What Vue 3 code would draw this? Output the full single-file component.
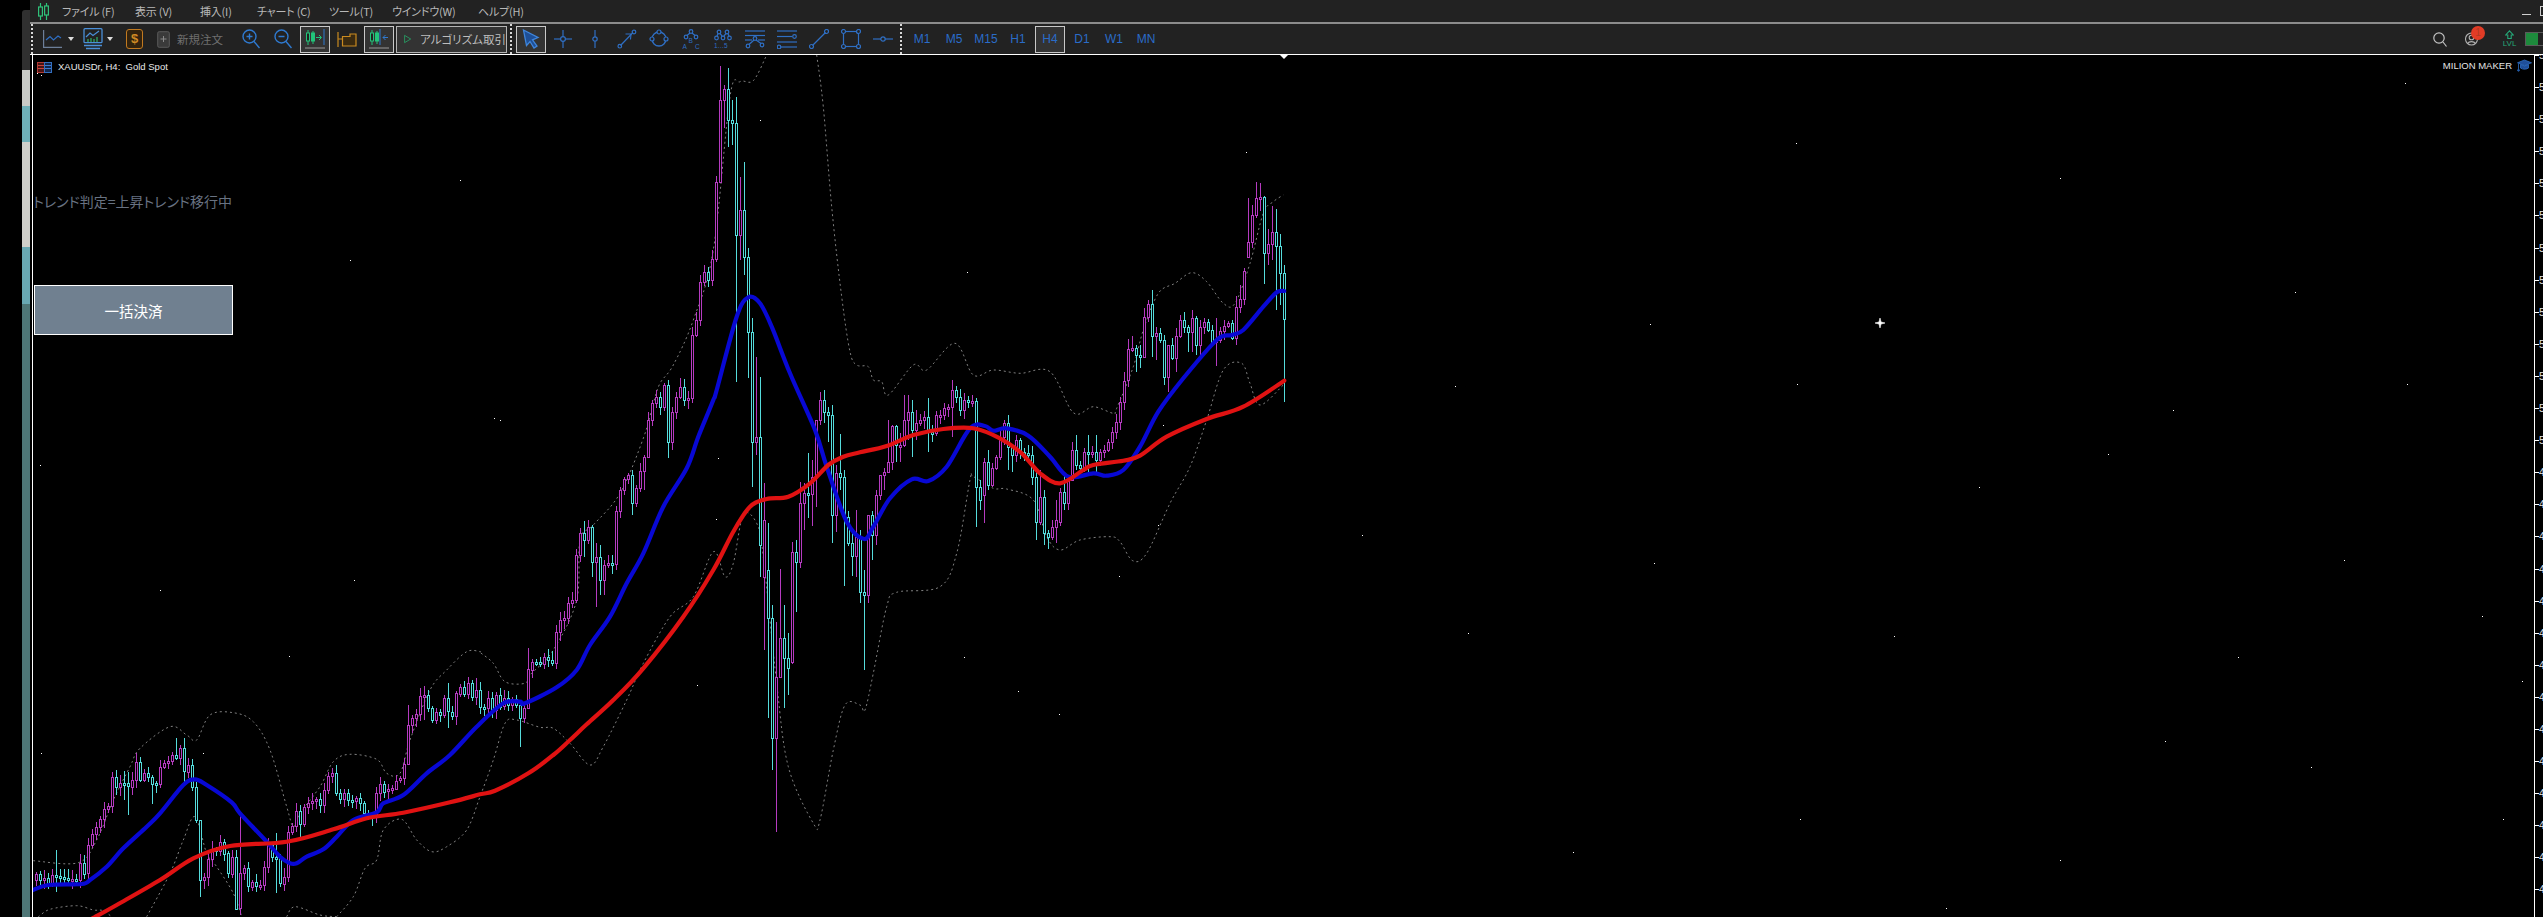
<script setup>
const W = 2501, H = 862

// ---------- candle closes, read off the chart ----------
const A = [702,720,714,730,704,708,712,714,720,717,720,668,700,615,582,562,538,508,498,410,440,428,430,440,420,365,418,398,410,430,432,380,368,362,345,355,325,395,375,442,540,720,712,658,628,632,605,640,700,650,805,700,685,740,725,738,736,682,615,650,652,730,710,575,558,512,550,500,488,483,478,495,450,408,398,458,475,458,480,485,475,490,520,525,528,460,432,455,448,445,422,415,373,255,235,222,168,165,205,240,215,225,175,215,228,160,140,160,128,170,150,200,205,175,210,165].map(v => 640 + v / 3)
const B = [920,895,915,897,915,955,925,808,785,787,790,770,780,790,697,660,655,610,600,465,400,420,380,485,470,540,495,490,492,333,270,238,225,310,265,213,170,60].map(v => 400 + v / 3)
const C = [403,397,407,385,442,412,397,387,400,398,335,320,282,272,280,259,182,100,89,120,123,235,210,257,332,442,437,545,520,618,738,677,638,658,668,552,562,503,493,494,477,420,400,412,415,515,473,477,517,543,556,537,592,595,515,535,495,475,472,462,426,445,445,420,412,430,423,420,417,432,433,415,415,408,407,390,397,410,400,402,401,487,500,462,485,468,457,437,423,447,455,440,452,453,455,477,522,497,533,537,527,520,492,503,480,450,465,468,452,453,452,460,452,450,442,432,422,402,381,349,348,355,357,317,304,336,333,340,377,345,358,336,320,327,332,318,345,327,322,330,342,340,331,326,323,338,307,299,271,242,215,198,197,253,244,232,246,273,319]
const closes = [...A, ...B, ...C]

const bodyFix = { 616:[511,564],764:[520,577],768:[570,618],776:[677,738],792:[552,662],800:[503,562],1248:[242,257],1264:[197,253],984:[462,495],1060:[492,522],1068:[480,503],1144:[317,357],1128:[349,380] }
const wicks = { 56:[850,892],116:[770,795],124:[771,800],128:[772,815],152:[775,804],176:[738,760],184:[738,785],200:[820,897],236:[850,908],240:[815,915],276:[833,893],300:[805,837],408:[705,760],424:[686,720],448:[683,728],476:[678,705],520:[700,747],528:[648,693],584:[521,557],592:[525,577],596:[543,607],600:[545,595],604:[560,595],632:[470,515],636:[485,507],644:[455,490],648:[412,448],668:[380,458],716:[176,262],720:[66,180],724:[85,128],728:[68,147],732:[100,145],736:[97,382],740:[177,260],744:[162,275],748:[248,378],752:[318,487],756:[357,455],760:[377,577],764:[483,650],768:[523,718],772:[605,770],776:[622,832],780:[569,670],784:[605,708],788:[633,695],792:[542,664],796:[540,612],800:[482,568],804:[483,530],808:[453,518],812:[460,526],816:[425,507],820:[392,425],824:[390,423],828:[407,442],832:[405,543],836:[465,532],840:[434,490],844:[470,586],852:[530,576],856:[510,577],860:[530,603],864:[570,670],868:[515,603],872:[511,560],876:[490,545],880:[483,500],884:[468,490],888:[420,470],892:[425,470],896:[425,462],900:[433,462],904:[395,447],908:[395,440],912:[400,457],916:[410,440],928:[398,452],944:[403,420],952:[380,437],976:[398,527],980:[480,510],984:[458,523],988:[450,490],1000:[430,460],1004:[420,445],1008:[415,470],1012:[448,472],1032:[446,485],1036:[470,540],1040:[470,525],1044:[490,545],1048:[530,549],1052:[520,540],1056:[500,543],1064:[473,510],1072:[442,478],1076:[435,470],1088:[435,472],1096:[435,472],1128:[339,387],1132:[336,352],1136:[345,372],1140:[345,368],1144:[308,358],1148:[300,322],1152:[290,357],1156:[327,360],1164:[335,385],1168:[345,392],1172:[338,360],1176:[328,372],1180:[315,338],1188:[325,352],1192:[310,352],1196:[316,355],1200:[320,358],1216:[318,366],1224:[320,340],1232:[320,340],1236:[296,345],1240:[285,313],1244:[268,305],1248:[198,258],1252:[205,248],1256:[182,218],1260:[183,211],1264:[196,284],1268:[229,265],1272:[206,260],1276:[209,310],1280:[234,305],1284:[265,402] }

let seed = 73
const rnd = () => (seed = (seed * 16807) % 2147483647) / 2147483647

const candles = closes.map((close, i) => {
  const x = 36 + i * 4
  const open = i ? closes[i - 1] : close + 6
  const up = close <= open
  let top = Math.min(open, close), bot = Math.max(open, close)
  if (bodyFix[x]) [top, bot] = bodyFix[x]
  if (bot - top < 2) bot = top + 2
  const hw = [top - (2 + rnd() * 7), bot + (2 + rnd() * 7)]
  const [hi, lo] = wicks[x] || hw
  return { x, top: Math.round(top), h: Math.round(bot - top), hi: Math.round(hi), lo: Math.round(lo), cls: up ? 'm' : 'c' }
})

// ---------- lines ----------
const z = (x0, y0, a) => a.map(([X, Y]) => [x0 + X / 3, y0 + Y / 3])
const z5 = a => z(0, 640, a), z8 = a => z(480, 400, a), z7 = a => z(650, 50, a), z9 = a => z(740, 380, a), z10 = a => z(950, 340, a), z6 = a => z(1100, 150, a)

const smooth = pts => {
  let d = `M${pts[0][0].toFixed(1)} ${pts[0][1].toFixed(1)}`
  for (let i = 0; i < pts.length - 1; i++) {
    const p0 = pts[i - 1] || pts[i], p1 = pts[i], p2 = pts[i + 1], p3 = pts[i + 2] || p2
    const c1x = p1[0] + (p2[0] - p0[0]) / 6, c1y = p1[1] + (p2[1] - p0[1]) / 6
    const c2x = p2[0] - (p3[0] - p1[0]) / 6, c2y = p2[1] - (p3[1] - p1[1]) / 6
    d += `C${c1x.toFixed(1)} ${c1y.toFixed(1)} ${c2x.toFixed(1)} ${c2y.toFixed(1)} ${p2[0].toFixed(1)} ${p2[1].toFixed(1)}`
  }
  return d
}

const blue = smooth([[33,890],
  ...z5([[145,735],[245,732],[270,720],[320,680],[370,625],[440,560],[480,520],[550,435],[585,418],[620,435],[695,487],[720,520],[800,605],[840,650],[870,670],[890,670],[920,650],[970,628],[1010,590],[1060,540],[1130,517],[1150,490],[1210,465],[1280,400],[1350,345],[1430,260]]),
  ...z8([[70,910],[120,905],[135,910],[230,862],[290,810],[330,735],[390,650],[440,550],[490,460],[550,320],[620,205],[655,110],[700,0]]),
  ...z7([[200,1020],[260,800],[295,742],[330,760],[365,830],[420,970]]),
  ...z9([[225,150],[260,260],[320,425],[372,477],[400,440],[450,355],[515,298],[565,303],[620,260],[690,145]]),
  ...z10([[105,258],[130,272],[170,265],[235,287],[300,350],[355,410],[430,400],[470,407],[520,390],[570,320],[625,215],[700,115],[800,0]]),
  ...z6([[395,555],[430,540],[490,470],[530,427],[553,423]])])

const red = smooth([[80,925],
  ...z5([[285,831],[350,795],[480,720],[580,655],[690,618],[860,605],[1000,568],[1100,535],[1210,518],[1350,487]]),
  ...z8([[0,1183],[45,1172],[145,1120],[220,1065],[270,1020],[320,973],[400,900],[490,805],[610,650],[700,510],[760,395],[810,320],[860,297],[925,290],[990,250],[1045,195],[1090,170],[1140,157]]),
  ...z9([[440,198],[520,165],[610,147],[700,145]]),
  ...z10([[150,295],[215,340],[270,400],[330,430],[400,390],[430,375],[520,362],[570,347],[650,290],[770,237],[880,200],[1003,122]])])

const bands = [
  [...z5([[100,662],[235,668],[290,600],[340,480],[390,380],[420,325],[510,260],[560,285],[590,300],[630,225],[700,218],[760,245],[810,330],[860,500],[880,560],[900,520],[960,440],[1000,365],[1050,343],[1130,358],[1160,400],[1200,400],[1230,300],[1290,150],[1340,90],[1400,35],[1440,35]]),
   ...z8([[0,757],[40,790],[75,845],[135,850],[150,825],[220,750],[290,600],[300,420],[340,375],[420,280],[490,115],[520,10]]),
   ...z7([[30,1000],[70,945],[130,810],[190,600],[240,140],[270,95],[310,92],[350,15]])],
  [...z7([[500,15],[520,170],[545,470],[575,740],[600,905],[620,945],[655,950],[670,990],[695,995],[715,1035],[790,945],[830,960],[915,880],[970,975]]),
   ...z10([[130,90],[210,100],[300,95],[370,218],[430,200],[490,220]]),
   ...z6([[50,775],[100,650],[130,540],[175,430],[225,400],[275,368],[320,395],[370,460],[405,460],[450,340],[490,190],[520,155],[550,135]])],
  z5([[100,835],[115,830],[150,808],[230,797],[280,810],[310,812],[340,835]]),
  z5([[440,830],[510,700],[550,600],[585,530],[620,640],[650,680],[700,760],[725,830]]),
  z5([[860,830],[885,800],[960,825],[1010,830]]),
  [...z5([[1010,830],[1060,770],[1095,685],[1130,660],[1150,570],[1205,538],[1250,600],[1295,635],[1340,620],[1400,570],[1440,470]]),
   ...z8([[40,1080],[75,970],[110,960],[180,982],[220,985],[270,1030],[330,1095],[370,1040],[440,900],[490,790],[570,650],[640,590],[700,455],[735,530],[760,490],[790,345],[830,370],[850,470],[890,850],[925,1100],[1000,1270],[1020,1260],[1060,1050],[1095,915],[1140,915]]),
   ...z9([[375,990],[400,880],[440,680],[470,637],[600,620],[650,520],[690,300],[700,290],[760,325],[800,327],[880,360],[920,470],[960,510],[1020,480]]),
   ...z10([[480,590],[510,605],[548,662],[590,640],[660,490],[720,380],[770,240],[820,90],[875,70],[900,130],[930,195],[1000,135]])]
].map(smooth)

const dots = [[37,73],[41,75],[40,465],[289,656],[41,753],[203,753],[1246,152],[967,272],[494,418],[718,458],[716,519],[697,685],[964,657],[1018,691],[1059,714],[1163,425],[1119,576],[1158,525],[2405,83],[1796,143],[2060,178],[2295,292],[1650,324],[2173,410],[2407,384],[1455,386],[1797,384],[1894,636],[1979,487],[2108,454],[1654,563],[1468,633],[2344,560],[1362,535],[2482,616],[2238,657],[2165,741],[2522,681],[1573,852],[1946,908],[2311,767],[1800,819],[2060,860],[2503,819],[350,260],[460,180],[760,120],[135,330],[500,420],[354,580],[160,590]]
const tx = 33, ty = 55

// ---------- toolbar ----------
const B1 = '#2f6fc4'
const node = (x, y, r = 1.8) => `<circle cx="${x}" cy="${y}" r="${r}" fill="none" stroke="${B1}" stroke-width="1.2"/>`
const ln = (a, b, c, d) => `<path d="M${a} ${b}L${c} ${d}" stroke="${B1}" stroke-width="1.2" fill="none"/>`
const drawTools = [
  { name: 'cross', svg: ln(1,10,19,10) + ln(10,1,10,19) + `<circle cx="10" cy="10" r="2.4" fill="#222" stroke="${B1}" stroke-width="1.2"/>` },
  { name: 'vline', svg: ln(10,1,10,19) + `<circle cx="10" cy="10" r="2.2" fill="#222" stroke="${B1}" stroke-width="1.2"/>` },
  { name: 'trend', svg: ln(3.5,16.5,16,3.5) + node(2.8,17.2) + node(17,3) + `<path d="M10 4L15.5 4L15 9.5" fill="none" stroke="${B1}" stroke-width="1.1" transform="translate(-1.5 1)"/>` },
  { name: 'ellipse', svg: `<circle cx="10" cy="10" r="7" fill="none" stroke="${B1}" stroke-width="1.3"/>` + `<circle cx="3" cy="10" r="2" fill="#222" stroke="${B1}" stroke-width="1.2"/><circle cx="17" cy="10" r="2" fill="#222" stroke="${B1}" stroke-width="1.2"/><circle cx="10" cy="3" r="2" fill="#222" stroke="${B1}" stroke-width="1.2"/>` },
  { name: 'abc', svg: node(10,2.5) + node(5,8) + node(15,8) + ln(9,4,6,6.5) + ln(11,4,14,6.5) + `<text x="1.5" y="19.5" font-size="6.5" fill="${B1}" font-family="Liberation Sans">A</text><text x="7.6" y="13.5" font-size="6.5" fill="${B1}" font-family="Liberation Sans">B</text><text x="14" y="19.5" font-size="6.5" fill="${B1}" font-family="Liberation Sans">C</text>` },
  { name: 'wave', svg: node(6,3) + node(14,3) + node(3.5,9) + node(10,9) + node(16.5,9) + ln(5,4.5,4,7.2) + ln(7,4.5,9.2,7.2) + ln(13,4.5,10.8,7.2) + ln(15,4.5,16,7.2) + `<text x="1" y="19" font-size="6.5" fill="${B1}" font-family="Liberation Sans">1…5</text>` },
  { name: 'fan', svg: ln(0,2,20,2) + ln(0,6.5,20,6.5) + ln(0,11,7,11) + ln(13,11,20,11) + node(10,9.5,1.8) + node(3,17,1.8) + node(17,16,1.8) + ln(9,11,4,15.5) + ln(11,11,16,14.5) },
  { name: 'lines', svg: ln(0,2,20,2) + ln(0,7.5,15,7.5) + node(17.5,7.5) + ln(0,13,20,13) + ln(4,18,20,18) + node(2,18) },
  { name: 'segment', svg: ln(3.5,16.5,16.5,3.5) + node(2.5,17.5,2) + node(17.5,2.5,2) },
  { name: 'rect', svg: `<rect x="2.5" y="2.5" width="15" height="15" fill="none" stroke="${B1}" stroke-width="1.2"/>` + ['2.5 2.5','17.5 2.5','2.5 17.5','17.5 17.5'].map(p => { const [a,b] = p.split(' '); return `<circle cx="${a}" cy="${b}" r="2" fill="#222" stroke="${B1}" stroke-width="1.2"/>` }).join('') },
  { name: 'hline', svg: ln(0,10,20,10) + `<circle cx="10" cy="10" r="2.2" fill="#222" stroke="${B1}" stroke-width="1.2"/>` }
]
const frames = ['M1','M5','M15','H1','H4','D1','W1','MN']
const menus = [['ファイル (F)',73],['表示 (V)',65],['挿入(I)',57],['チャート (C)',72],['ツール(T)',63],['ウインドウ(W)',86],['ヘルプ(H)',50]]

// ---------- price axis ----------
const ticks = Array.from({ length: 27 }, (_, i) => (i <= 12 ? '5' : '4'))
</script>

<template>
  <div class="page">
    <div class="gutter"></div>
    <div class="rail">
      <i class="seg s0"></i><i class="seg s1"></i><i class="seg s2"></i><i class="seg s3"></i><i class="seg s4"></i><i class="seg s5"></i>
    </div>
    <div class="main">
      <header class="titlebar">
        <svg class="logo" width="11" height="17" viewBox="0 0 11 17">
          <g fill="none" stroke="#2fc27a" stroke-width="1.2">
            <path d="M2.5 0V17M8.5 0V17"/>
            <rect x="0.6" y="4" width="3.8" height="9" fill="#222"/>
            <rect x="6.6" y="3" width="3.8" height="9" fill="#222"/>
          </g>
        </svg>
        <nav class="menu">
          <span v-for="m in menus" :key="m[0]" class="menu-item" :style="{ width: m[1] + 'px' }">{{ m[0] }}</span>
        </nav>
        <div class="winctl"><i class="min"></i><i class="max"></i></div>
      </header>

      <div class="toolbar">
        <i class="grip"></i>
        <div class="dd first">
          <svg width="19" height="18" viewBox="0 0 19 18" fill="none">
            <path d="M0.6 0V17.4H19" stroke="#6d7f99" stroke-width="1.2"/>
            <path d="M3 10L7 6.5L10.5 10L15 6L18 8" stroke="#2f6fc4" stroke-width="1.2"/>
          </svg>
          <i class="caret"></i>
        </div>
        <div class="dd second">
          <svg width="20" height="22" viewBox="0 0 20 22" fill="none">
            <rect x="1" y="0.7" width="18" height="14" rx="1" stroke="#4a8fd8" stroke-width="1.3"/>
            <path d="M3 9L7 5L10 7.5L16 3" stroke="#4a8fd8" stroke-width="1.2"/>
            <path d="M5 14V11M8 14V10M11 14V11M14 14V9" stroke="#2fb36a" stroke-width="1.2"/>
            <path d="M1 17.5H19M3 20.5H17" stroke="#4a8fd8" stroke-width="1.3"/>
          </svg>
          <i class="caret"></i>
        </div>
        <div class="dollar">$</div>
        <div class="order">
          <svg width="13" height="17" viewBox="0 0 13 17" fill="none">
            <rect x="0.7" y="0.7" width="11.6" height="15.6" rx="1.5" fill="#3a3a3a" stroke="#5a5a5a"/>
            <path d="M6.5 5V11M3.5 8H9.5" stroke="#8a8a8a"/>
          </svg>
          <span>新規注文</span>
        </div>
        <div class="tool">
          <svg width="18" height="20" viewBox="0 0 18 20" fill="none" stroke="#2f7ad0" stroke-width="1.4">
            <circle cx="7.5" cy="7.5" r="6.5"/><path d="M12 12.5L17.5 19M4.5 7.5H10.5M7.5 4.5V10.5"/>
          </svg>
        </div>
        <div class="tool">
          <svg width="18" height="20" viewBox="0 0 18 20" fill="none" stroke="#2f7ad0" stroke-width="1.4">
            <circle cx="7.5" cy="7.5" r="6.5"/><path d="M12 12.5L17.5 19M4.5 7.5H10.5"/>
          </svg>
        </div>
        <div class="tool sel">
          <svg width="20" height="20" viewBox="0 0 20 20" fill="none">
            <path d="M3 1V16M8 2V15" stroke="#22c47a"/>
            <rect x="1.5" y="4" width="3" height="8" fill="#222" stroke="#22c47a"/>
            <rect x="6.5" y="4" width="3" height="8" fill="#22c47a" stroke="#22c47a"/>
            <path d="M11 8.5H16M14 6L16.5 8.5L14 11" stroke="#22c47a"/>
            <path d="M19 0V16" stroke="#2f7ad0"/>
            <path d="M0 19H20" stroke="#999"/>
          </svg>
        </div>
        <div class="tool">
          <svg width="20" height="17" viewBox="0 0 20 17" fill="none" stroke="#c98a20" stroke-width="1.2">
            <path d="M1 1V16M1 8H5"/>
            <path d="M5.5 5.5H13V3H19V15H5.5Z" fill="#3a2a10"/>
          </svg>
        </div>
        <div class="tool sel">
          <svg width="20" height="20" viewBox="0 0 20 20" fill="none">
            <path d="M3 1V16M8 2V15" stroke="#22c47a"/>
            <rect x="1.5" y="4" width="3" height="8" fill="#222" stroke="#22c47a"/>
            <rect x="6.5" y="4" width="3" height="8" fill="#22c47a" stroke="#22c47a"/>
            <path d="M11 0V16" stroke="#2f7ad0"/>
            <path d="M19 8.5H14M16.5 6L14 8.5L16.5 11" stroke="#2f7ad0"/>
            <path d="M0 19H20" stroke="#999"/>
          </svg>
        </div>
        <div class="algo">
          <svg width="12" height="14" viewBox="0 0 12 14" fill="none"><path d="M1 1L11 7L1 13Z" stroke="#26b36e" stroke-width="1.2"/></svg>
          <span>アルゴリズム取引</span>
        </div>
        <i class="grip g2"></i>
        <div class="tool sel cursor">
          <svg width="18" height="20" viewBox="0 0 18 20" fill="#1e4f96" stroke="#3f86dc" stroke-width="1.3">
            <path d="M1.5 1L16 8.5L10.5 10.8L15 17L12 19L8 12.5L4.5 16.5Z"/>
          </svg>
        </div>
        <div v-for="t in drawTools" :key="t.name" class="tool">
          <svg width="20" height="20" viewBox="0 0 20 20" v-html="t.svg"></svg>
        </div>
        <i class="grip g3"></i>
        <div v-for="f in frames" :key="f" class="tool tf" :class="{ sel: f === 'H4' }">{{ f }}</div>
        <div class="right">
          <svg class="search" width="14" height="15" viewBox="0 0 14 15" fill="none" stroke="#c4c4c4" stroke-width="1.2">
            <circle cx="6" cy="6" r="5.2"/><path d="M10 10L13.5 14.5"/>
          </svg>
          <div class="user">
            <svg width="13" height="14" viewBox="0 0 13 14" fill="none" stroke="#b0b0b0" stroke-width="1.1">
              <circle cx="6.5" cy="7" r="6"/><circle cx="6.5" cy="5.5" r="2.3"/><path d="M2.5 11.5C4 9 9 9 10.5 11.5"/>
            </svg>
            <span class="badge">1</span>
          </div>
          <div class="lvl">
            <svg width="9" height="9" viewBox="0 0 9 9" fill="none" stroke="#25a878" stroke-width="1.1"><path d="M4.5 .8L8.3 5H6.2V8.5H2.8V5H.7Z"/></svg>
            <span>LVL</span>
          </div>
          <div class="toggle"><i></i></div>
        </div>
      </div>

      <div class="chart-row">
        <div class="chart">
          <svg class="plot" :width="W" :height="H" :viewBox="`${tx} ${ty} ${W} ${H}`">
            <path v-for="(d, i) in bands" :key="'b' + i" :d="d" class="band" />
            <g shape-rendering="crispEdges">
              <g v-for="c in candles" :key="c.x" :class="c.cls">
                <line :x1="c.x + 0.5" :x2="c.x + 0.5" :y1="c.hi" :y2="c.lo" />
                <rect :x="c.x - 0.5" :y="c.top + 0.5" width="2" :height="c.h" />
              </g>
            </g>
            <path :d="blue" class="ma blue" />
            <path :d="red" class="ma red" />
            <g shape-rendering="crispEdges">
              <rect v-for="(p, i) in dots" :key="'d' + i" :x="p[0]" :y="p[1]" width="1" height="1" fill="#fff" />
            </g>
            <polygon points="1280,55 1288,55 1284,59" fill="#fff" />
            <path d="M1880 318L1881 322L1885 323L1881 324L1880 328L1879 324L1875 323L1879 322Z" fill="#fff" stroke="#fff" stroke-width=".6" />
          </svg>

          <div class="symbol">
            <svg width="15" height="11" viewBox="0 0 15 11">
              <rect x="0.5" y="0.5" width="7" height="10" fill="#4a1414" stroke="#b03a34"/>
              <rect x="7.5" y="0.5" width="7" height="10" fill="#12264c" stroke="#3470c0"/>
              <path d="M1 3.5H7M1 6.5H7" stroke="#c8443c"/><path d="M8 3.5H14M8 6.5H14" stroke="#3c7cd0"/>
            </svg>
            <span>XAUUSDr, H4:&nbsp;&nbsp;Gold Spot</span>
          </div>
          <div class="trend">トレンド判定=上昇トレンド移行中</div>
          <button class="close-all">一括決済</button>
          <div class="brand">
            <span>MILION MAKER</span>
            <svg width="15" height="13" viewBox="0 0 15 13" fill="#1f4f9a" stroke="#2f6fc4" stroke-width=".8">
              <path d="M7.5 1L14.5 3.8L7.5 6.6L.5 3.8Z"/><path d="M3.5 5.5V9C5.5 10.6 9.5 10.6 11.5 9V5.5L7.5 7Z"/><path d="M1.5 4.5V10.5" fill="none"/><circle cx="1.5" cy="11.3" r=".9"/>
            </svg>
          </div>
        </div>
        <div class="axis">
          <div v-for="(t, i) in ticks" :key="i" class="tick"><span>{{ t }}</span></div>
        </div>
      </div>
    </div>
  </div>
</template>

<style>
html, body { margin: 0; background: #000; overflow: hidden; }
</style>

<style scoped>
.page { width: 2543px; height: 917px; display: flex; background: #000; overflow: hidden; font-family: "Noto Sans CJK JP", "Liberation Sans", sans-serif; }
.gutter { width: 22px; flex: none; }
.rail { width: 8px; flex: none; margin-top: 10px; display: flex; flex-direction: column; border-radius: 3px 0 0 0; overflow: hidden; }
.seg { display: block; flex: none; }
.s0 { height: 60px; background: #303030; }
.s1 { height: 36px; background: #c8cac6; }
.s2 { height: 36px; background: #6eb0b8; }
.s3 { height: 105px; background: #cfcfca; }
.s4 { height: 57px; background: #68a8b2; }
.s5 { flex: 1; background: #4e7676; }
.main { flex: 1; min-width: 0; display: flex; flex-direction: column; }

.titlebar { height: 22px; flex: none; display: flex; align-items: center; background: #222; padding-left: 8px; overflow: hidden; }
.logo { flex: none; margin-right: 13px; margin-top: 1px; }
.menu { display: flex; }
.menu-item { flex: none; color: #b8b8b8; font-size: 11px; letter-spacing: -0.2px; line-height: 22px; white-space: nowrap; font-feature-settings: "palt"; }
.winctl { margin-left: auto; display: flex; align-items: center; gap: 9px; }
.min { width: 9px; height: 1px; background: #d0d0d0; margin-top: 6px; }
.max { width: 8px; height: 8px; border: 1px solid #cfcfcf; margin-right: -7px; }

.toolbar { height: 30px; flex: none; display: flex; align-items: center; background: #222; border-top: 2px solid #8c8c8c; padding-left: 1px; }
.grip { width: 2px; height: 30px; flex: none; background: repeating-linear-gradient(#d8d8d8 0 2px, transparent 2px 4px); }
.dd { width: 32px; flex: none; display: flex; align-items: center; gap: 6px; }
.dd.first { margin-left: 9px; gap: 6px; padding-left: 1px; width: 31px; }
.dd.second { margin-left: 8px; gap: 4px; padding-left: 1px; width: 31px; }
.caret { width: 0; height: 0; border: 3.5px solid transparent; border-top: 4px solid #ddd; border-bottom: 0; flex: none; }
.dollar { margin-left: 12px; width: 17px; height: 20px; flex: none; box-sizing: border-box; border: 1.5px solid #c27a20; border-radius: 3px; background: #33230e; color: #d08a24; font: bold 13px/17px "Liberation Sans", sans-serif; text-align: center; }
.order { margin-left: 14px; width: 70px; flex: none; display: flex; align-items: center; gap: 7px; color: #6e6e6e; font-size: 11.5px; white-space: nowrap; margin-right: 9px; }
.tool { width: 30px; height: 27px; margin-right: 2px; flex: none; box-sizing: border-box; display: flex; align-items: center; justify-content: center; }
.tool.sel { border: 1px solid #c8c8c8; background: #333; }
.algo { width: 111px; height: 27px; flex: none; box-sizing: border-box; border: 1px solid #b4b4b4; background: #333; display: flex; align-items: center; gap: 9px; padding-left: 7px; color: #bdbdbd; font-size: 11.5px; font-feature-settings: "palt"; white-space: nowrap; }
.g2 { margin: 0 4px 0 3px; }
.g3 { margin: 0 5px 0 0; }
.tf { color: #2a6cc8; font: 12px "Liberation Sans", sans-serif; }
.right { margin-left: auto; display: flex; align-items: center; }
.search { margin-right: 18px; }
.user { position: relative; display: flex; margin-right: 25px; }
.badge { position: absolute; left: 6px; top: -6px; width: 14px; height: 14px; border-radius: 50%; background: #e23c26; color: #b03a24; font: 10px/14px "Liberation Sans", sans-serif; text-align: center; }
.lvl { width: 13px; display: flex; flex-direction: column; align-items: center; color: #25a878; font: 8px/8px "Liberation Sans", sans-serif; margin-right: 9px; }
.lvl span { margin-top: 1px; }
.toggle { width: 24px; height: 14px; margin-right: -6px; box-sizing: border-box; border: 1px solid #5a5a5a; display: flex; }
.toggle i { width: 12px; background: #1d8a3c; }

.chart-row { flex: 1; min-height: 0; display: flex; border-top: 1px solid #fff; background: #000; }
.chart { position: relative; margin-left: 2px; width: 2501px; flex: none; border-left: 1px solid #fff; border-right: 1px solid #fff; overflow: hidden; }
.plot { position: absolute; left: 0; top: 0; display: block; }
.band { fill: none; stroke: #808080; stroke-width: 1; stroke-dasharray: 2 3; }
.m line { stroke: #b53bc0; stroke-width: 1; }
.m rect { fill: #000; stroke: #b53bc0; stroke-width: 1; }
.c line { stroke: #55dcdc; stroke-width: 1; }
.c rect { fill: #000; stroke: #55dcdc; stroke-width: 1; }
.ma { fill: none; stroke-width: 4.2; stroke-linejoin: round; stroke-linecap: round; }
.blue { stroke: #0808d4; }
.red { stroke: #e01212; }
.symbol { position: absolute; left: 4px; top: 6px; display: flex; align-items: center; gap: 6px; color: #e8e8e8; font: 9.5px/12px "Liberation Sans", sans-serif; white-space: nowrap; }
.trend { position: absolute; left: 0; top: 136px; color: #687282; font-size: 14px; line-height: 20px; white-space: nowrap; font-feature-settings: "palt"; }
.close-all { position: absolute; left: 1px; top: 230px; width: 199px; height: 50px; box-sizing: border-box; border: 1px solid #fff; background: #708090; color: #fff; font: 14.5px "Noto Sans CJK JP", sans-serif; padding: 0; }
.brand { position: absolute; right: 2px; top: 4px; display: flex; align-items: center; gap: 5px; color: #e4e4e4; font: 9.5px/13px "Liberation Sans", sans-serif; white-space: nowrap; }
.axis { flex: 1; min-width: 0; overflow: hidden; padding-top: 0; }
.tick { height: 32.1px; position: relative; }
.tick::before { content: ""; position: absolute; left: 0; top: 0; width: 4px; height: 1px; background: #fff; }
.tick span { position: absolute; left: 4px; top: -6px; color: #e8e8e8; font: 10.5px/12px "Liberation Sans", sans-serif; }
</style>
